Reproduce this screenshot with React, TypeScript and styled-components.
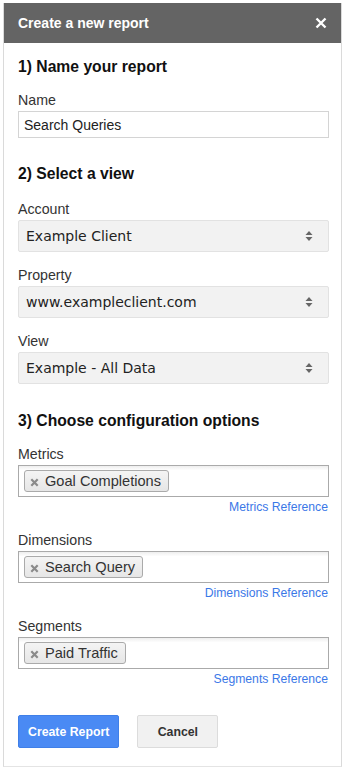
import React from 'react';
import styled, {createGlobalStyle} from 'styled-components';

const GlobalStyle = createGlobalStyle`
  html, body {
    margin: 0;
    padding: 0;
    background: #ffffff;
  }
  body {
    font-family: "Liberation Sans", Arial, sans-serif;
  }
`;

interface SelectField {
  label: string;
  value: string;
}

interface TokenField {
  label: string;
  token: string;
  link: string;
}

const selects: SelectField[] = [
  {label: 'Account', value: 'Example Client'},
  {label: 'Property', value: 'www.exampleclient.com'},
  {label: 'View', value: 'Example - All Data'},
];

const tokens: TokenField[] = [
  {label: 'Metrics', token: 'Goal Completions', link: 'Metrics Reference'},
  {label: 'Dimensions', token: 'Search Query', link: 'Dimensions Reference'},
  {label: 'Segments', token: 'Paid Traffic', link: 'Segments Reference'},
];

const CloseIcon = () => (
  <svg width="12" height="12" viewBox="0 0 12 12">
    <path d="M1.5 1.5 L10.5 10.5 M10.5 1.5 L1.5 10.5" stroke="#fff" strokeWidth="2.4" />
  </svg>
);

const SortArrows = () => (
  <svg width="8" height="12" viewBox="0 0 8 12">
    <path d="M4 1 L7.5 5 H0.5 Z" fill="#666" />
    <path d="M4 11 L7.5 7 H0.5 Z" fill="#666" />
  </svg>
);

const RemoveIcon = () => (
  <svg width="9" height="9" viewBox="0 0 9 9">
    <path d="M1.3 1.3 L7.7 7.7 M7.7 1.3 L1.3 7.7" stroke="#8a8a8a" strokeWidth="2.2" />
  </svg>
);

export default function App() {
  return (
    <>
      <GlobalStyle />
      <StyledPage>
        <StyledDialog>
          <StyledHeader>
            <StyledTitle>Create a new report</StyledTitle>
            <CloseIcon />
          </StyledHeader>
          <StyledBody>
            <StyledHeading $top={15}>1) Name your report</StyledHeading>
            <StyledLabel $top={16}>Name</StyledLabel>
            <StyledInput>Search Queries</StyledInput>

            <StyledHeading $top={27}>2) Select a view</StyledHeading>
            {selects.map((s, i) => (
              <React.Fragment key={s.label}>
                <StyledLabel $top={i === 0 ? 18 : 15}>{s.label}</StyledLabel>
                <StyledSelect>
                  <span>{s.value}</span>
                  <SortArrows />
                </StyledSelect>
              </React.Fragment>
            ))}

            <StyledHeading $top={28}>3) Choose configuration options</StyledHeading>
            {tokens.map((t, i) => (
              <React.Fragment key={t.label}>
                <StyledLabel $top={i === 0 ? 16 : 18}>{t.label}</StyledLabel>
                <StyledTokenBox>
                  <StyledToken>
                    <RemoveIcon />
                    <span>{t.token}</span>
                  </StyledToken>
                </StyledTokenBox>
                <StyledLinkRow>
                  <StyledLink>{t.link}</StyledLink>
                </StyledLinkRow>
              </React.Fragment>
            ))}

            <StyledActions>
              <StyledButton $primary>Create Report</StyledButton>
              <StyledButton>Cancel</StyledButton>
            </StyledActions>
          </StyledBody>
        </StyledDialog>
      </StyledPage>
    </>
  );
}

const StyledPage = styled.div`
  padding: 3px 2px 0 3px;
  min-height: 771px;
  box-sizing: border-box;
  background: #fff;
`;

const StyledDialog = styled.div`
  width: 339px;
  box-sizing: border-box;
  border-left: 1px solid #dadada;
  border-right: 1px solid #dadada;
  border-bottom: 1px solid #e4e4e4;
  background: #fff;
`;

const StyledHeader = styled.div`
  height: 40px;
  background: #646464;
  display: flex;
  align-items: center;
  justify-content: space-between;
  padding: 0 14px 0 14px;
`;

const StyledTitle = styled.div`
  color: #fff;
  font-weight: bold;
  font-size: 14px;
`;

const StyledBody = styled.div`
  padding: 0 12px 18px 14px;
  display: flex;
  flex-direction: column;
`;

const StyledHeading = styled.div<{$top: number}>`
  margin-top: ${(p) => p.$top}px;
  font-size: 15.7px;
  line-height: 18px;
  font-weight: bold;
  color: #111;
`;

const StyledLabel = styled.div<{$top: number}>`
  margin-top: ${(p) => p.$top}px;
  font-size: 14.2px;
  line-height: 16px;
  color: #333;
`;

const StyledInput = styled.div`
  margin-top: 3px;
  height: 27px;
  box-sizing: border-box;
  border: 1px solid #d4d4d4;
  padding: 0 5px;
  display: flex;
  align-items: center;
  font-size: 14px;
  color: #222;
`;

const StyledSelect = styled.div`
  margin-top: 3px;
  height: 32px;
  box-sizing: border-box;
  border: 1px solid #e2e2e2;
  border-radius: 2px;
  background: #f2f2f2;
  padding: 0 15px 0 7px;
  display: flex;
  align-items: center;
  justify-content: space-between;
  font-family: "DejaVu Sans", sans-serif;
  font-size: 14px;
  color: #222;
`;

const StyledTokenBox = styled.div`
  margin-top: 3px;
  height: 32px;
  box-sizing: border-box;
  border: 1px solid #aaa;
  background: linear-gradient(#eee 0%, #fff 15%);
  padding: 4px 5px;
  display: flex;
  align-items: flex-start;
`;

const StyledToken = styled.div`
  height: 22px;
  box-sizing: border-box;
  border: 1px solid #aaa;
  border-radius: 3px;
  background: linear-gradient(#f4f4f4, #e6e6e6);
  display: flex;
  align-items: center;
  gap: 6px;
  padding: 0 7px 0 5px;
  font-size: 14.6px;
  color: #333;

  svg {
    margin-top: 3px;
  }
`;

const StyledLinkRow = styled.div`
  margin-top: 3px;
  display: flex;
  justify-content: flex-end;
  padding-right: 1px;
`;

const StyledLink = styled.span`
  font-size: 12.2px;
  line-height: 14px;
  color: #3b78e7;
`;

const StyledActions = styled.div`
  margin-top: 29px;
  display: flex;
  gap: 18px;
`;

const StyledButton = styled.button<{$primary?: boolean}>`
  height: 33px;
  box-sizing: border-box;
  padding: 0 ${(p) => (p.$primary ? '9px' : '19px')};
  min-width: ${(p) => (p.$primary ? '101px' : '81px')};
  border-radius: 2px;
  border: 1px solid ${(p) => (p.$primary ? '#3f7fe8' : '#dcdcdc')};
  background: ${(p) => (p.$primary ? '#4a8af4' : '#f1f1f1')};
  color: ${(p) => (p.$primary ? '#fff' : '#333')};
  font-family: "Liberation Sans", Arial, sans-serif;
  font-weight: bold;
  font-size: 12.3px;
  cursor: pointer;
`;
